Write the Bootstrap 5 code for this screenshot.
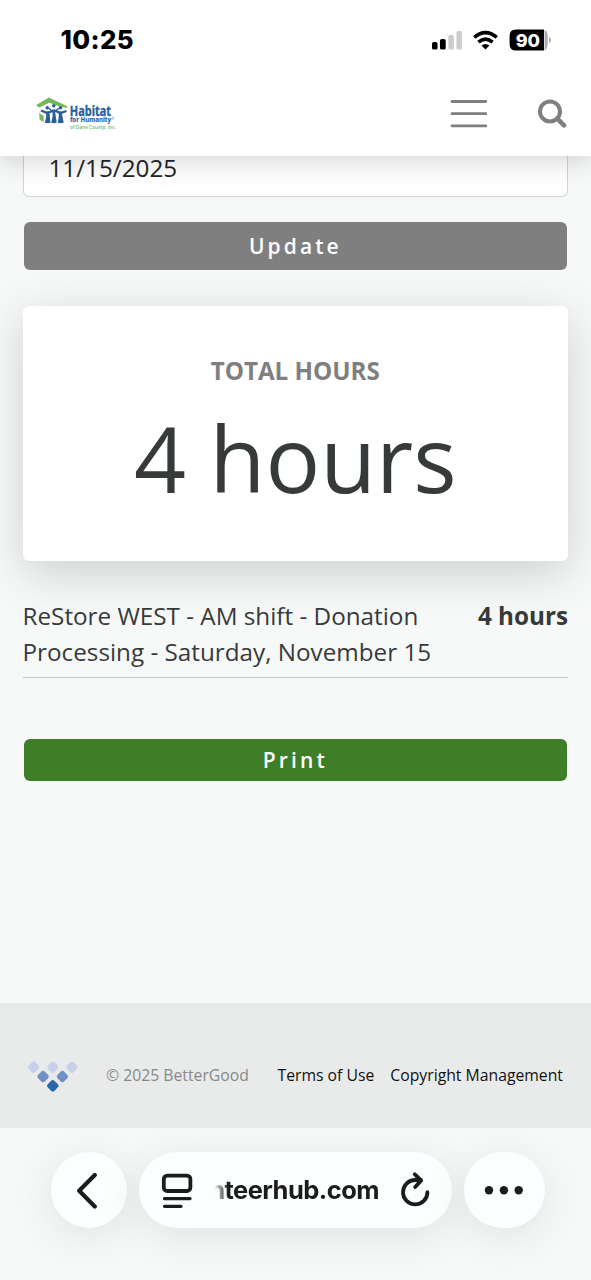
<!DOCTYPE html>
<html lang="en">
<head>
<meta charset="utf-8">
<meta name="viewport" content="width=device-width, initial-scale=1">
<title>Volunteer hours</title>
<link href="https://cdn.jsdelivr.net/npm/bootstrap@5.3.0/dist/css/bootstrap.min.css" rel="stylesheet">
<style>
body{font-family:"Open Sans","Noto Sans",sans-serif;background:#f7f9f9;color:#373a3b;height:1280px;overflow:hidden;font-size:24.25px}
svg{display:block;flex:none}
.top-area{height:156px;background:#fff;box-shadow:0 2px 28px rgba(0,0,0,.2);z-index:5}
.status-row{height:79px;padding:0 40px 0 60.5px}
.clock{font:800 25.8px/1 Inter,sans-serif;color:#000;letter-spacing:.35px;padding-top:1px}
.site-nav{height:77px;padding:0 24px 8px 35px}
.page-main{height:847px;padding:0 23px 0 22.5px}
.date-box{height:41px;border:1.5px solid #ced4da;border-top:0;border-radius:0 0 6px 6px;background:#fff;color:#212529;padding:0 25px;line-height:24px}
.wide-btn{margin:0 1.3px 0 1.5px;border:0;border-radius:6px;padding:1px 0 0;font-weight:600;font-size:21px;letter-spacing:3.1px;color:#fff}
.wide-btn.update{background:#7f7f7f;height:48.5px;margin-top:24.5px}
.wide-btn.print{background:#3d7e26;height:42.5px;margin-top:60.5px}
.wide-btn:hover{color:#fff}
.total-card{height:255px;margin-top:36px;border:0;border-radius:6px;box-shadow:0 12px 48px rgba(0,0,0,.17);color:#373a3b}
.total-label{font-size:24.2px;font-weight:700;line-height:36px;color:#7f7f7f;margin-top:47px}
.total-value{font-size:91px;line-height:110px;margin-top:14px}
.entry{margin-top:36.5px;line-height:36.3px;border-bottom:1.5px solid #c9cccc;height:80.5px}
.site-footer{height:125px;background:#e9ebeb;font-size:15.75px;padding:20px 28px 0 27px}
.site-footer a{color:#111;text-decoration:none}
.browser-bar{height:152px;padding:24px 0 0 51px;gap:12px}
.glass{height:76px;border-radius:41px;background:#fdfefe;box-shadow:0 8px 44px rgba(0,0,0,.095)}
.address{font:700 25.5px/34px Inter,sans-serif;letter-spacing:-.55px;color:#1b1c1c;width:165px;height:34px;overflow:hidden;direction:rtl;white-space:nowrap;-webkit-mask-image:linear-gradient(90deg,transparent,#000 14px)}
</style>
</head>
<body class="d-flex flex-column">
<header class="top-area position-relative flex-shrink-0">
  <div class="status-row d-flex align-items-center justify-content-between">
    <span class="clock">10:25</span>
    <svg width="120" height="24" viewBox="431 27 120 24">
      <rect x="432" y="41" width="5.5" height="7.6" rx="1.7"/><rect x="440" y="38" width="5.7" height="10.6" rx="1.7"/>
      <rect x="448.4" y="34" width="5.5" height="14.6" rx="1.7" fill="#ccc"/><rect x="456.4" y="30" width="5.5" height="18.6" rx="1.7" fill="#ccc"/>
      <g fill="none" stroke="#000" stroke-width="3.6"><path d="M474.2 36.4Q485.5 26.9 496.8 36.4"/><path d="M478.4 41.2Q485.5 35.1 492.6 41.2"/></g>
      <path d="M481.6 44.5Q485.5 41.4 489.4 44.5L485.5 48.6Z"/>
      <path d="M516 28.6H544V49.6H516Q509.6 49.6 509.6 43V35Q509.6 28.6 516 28.6Z"/>
      <path d="M544.6 28.8Q547.6 30.2 547.6 35V43Q547.6 48 544.6 49.4Z" fill="#aaa"/><path d="M549 36.2Q551 37 551 39.1T549 42Z" fill="#aaa"/>
      <text x="527.9" y="45.5" text-anchor="middle" font-family="Inter,sans-serif" font-weight="800" font-size="18" fill="#fff">90</text>
    </svg>
  </div>
  <nav class="site-nav d-flex align-items-center">
    <svg width="84" height="36" viewBox="35 96 84 36" class="me-auto" role="img" aria-label="Habitat for Humanity of Dane County">
      <path d="M36 105.3L48.8 97.6L67.2 106.2V107.8L61.8 107.2L49.2 102.8L39.3 107.4Z" fill="#72b95b"/>
      <path d="M39.2 113L43.7 116V122.3L39.6 119.8Z" fill="#72b95b"/>
      <g fill="#285f9b"><circle cx="47.3" cy="107.8" r="1.7"/><circle cx="53.8" cy="105.8" r="1.8"/><circle cx="60.5" cy="107.8" r="1.7"/></g>
      <g fill="none" stroke="#285f9b"><path d="M41 110.6L46 112.6H49L53 110.6H55L59 112.6H62L66.5 111" stroke-width="2.2"/><path d="M48.6 108.2L52.2 111H55.4L59 108.2" stroke-width="1.4"/>
      <path d="M47.6 111.5V117L46.2 123M48.3 114L49 123M53.9 110.5V117L52.5 123M54 114L55.3 123M60.2 111.5V117L59.2 123M60.6 114L62.3 123" stroke-width="2.8"/></g>
      <g font-family="'Open Sans',sans-serif"><text x="69.8" y="115.9" font-size="14.2" font-weight="700" fill="#285f9b" stroke="#285f9b" stroke-width=".35" textLength="41.3" lengthAdjust="spacingAndGlyphs">Habitat</text>
      <text x="70" y="122.3" font-size="7.4" font-weight="700" fill="#285f9b" stroke="#285f9b" stroke-width=".15" textLength="41" lengthAdjust="spacingAndGlyphs">for Humanity</text>
      <text x="111.3" y="120.4" font-size="3.5" fill="#285f9b">®</text>
      <text x="70" y="129.1" font-size="6" font-weight="600" fill="#72b95b" textLength="46" lengthAdjust="spacingAndGlyphs">of Dane County, Inc.</text></g>
    </svg>
    <svg width="38" height="30" viewBox="450 99 38 30" style="margin-right:50px" stroke="#7f7f7f" stroke-width="2.8" stroke-linecap="round"><path d="M452 101.5H485.8M452 113.7H485.8M452 125.9H485.8"/></svg>
    <svg width="29" height="30" viewBox="538 98.6 29 30" fill="none" stroke="#7f7f7f"><circle cx="550" cy="111" r="10" stroke-width="4"/><path d="M557.5 118.4L564 125" stroke-width="4.6" stroke-linecap="round"/></svg>
  </nav>
</header>
<main class="page-main d-flex flex-column flex-shrink-0">
  <div class="date-box">11/15/2025</div>
  <button class="btn wide-btn update">Update</button>
  <section class="card total-card text-center">
    <div class="total-label">TOTAL HOURS</div>
    <div class="total-value">4 hours</div>
  </section>
  <div class="entry d-flex justify-content-between position-relative">
    <div>ReStore WEST - AM shift - Donation<br>Processing - Saturday, November 15</div>
    <strong class="text-nowrap">4 hours</strong>
  </div>
  <button class="btn wide-btn print">Print</button>
</main>
<footer class="site-footer d-flex align-items-center flex-shrink-0">
  <svg width="52" height="32" viewBox="27 1060 52 32">
    <defs><rect id="gem" x="-4.7" y="-4.7" width="9.4" height="9.4" rx="2.5" transform="rotate(45)"/></defs>
    <g fill="#c8d0e9"><use href="#gem" x="33.6" y="1067.2"/><use href="#gem" x="52.8" y="1067.2"/><use href="#gem" x="72" y="1067.2"/></g>
    <g fill="#718fc7"><use href="#gem" x="43.1" y="1076.6"/><use href="#gem" x="62.4" y="1076.6"/></g>
    <use href="#gem" x="52.8" y="1085.8" fill="#2866ad"/>
  </svg>
  <span style="margin-left:27px;color:#878989">© 2025 BetterGood</span>
  <a href="#" class="ms-auto">Terms of Use</a><a href="#" class="ms-3">Copyright Management</a>
</footer>
<div class="browser-bar d-flex flex-shrink-0">
  <div class="glass d-flex align-items-center justify-content-center" style="width:76px">
    <svg width="24" height="38" viewBox="76.5 1171 24 38" fill="none" stroke="#1b1c1c" stroke-width="4.2" stroke-linecap="round" stroke-linejoin="round"><path d="M94.3 1174.9L78.7 1190.7L94.3 1206.5"/></svg>
  </div>
  <div class="glass d-flex align-items-center" style="width:312.5px;padding-left:22px">
    <svg width="32" height="38" viewBox="161 1171 32 38" fill="none" stroke="#1b1c1c" stroke-width="3.8" stroke-linecap="round"><rect x="163.8" y="1175.6" width="26.6" height="15.4" rx="3.5"/><path d="M164.5 1198.6H190M164.5 1206.3H181" stroke-width="3.3"/></svg>
    <div class="address" style="margin-left:21px">volunteerhub.com</div>
    <svg width="32" height="38" viewBox="399 1170 32 38" style="margin-left:20px" fill="none" stroke="#1b1c1c" stroke-width="3.8" stroke-linecap="round" stroke-linejoin="round"><path d="M427.4 1191.2A12.2 12.2 0 1 1 415.2 1179H421M414.8 1173.3L421.2 1179.4L415.2 1186"/></svg>
  </div>
  <div class="glass d-flex align-items-center justify-content-center" style="width:81.5px">
    <svg width="40" height="10" viewBox="484 1184.7 40 10" fill="#1b1c1c"><circle cx="489" cy="1190" r="4.2"/><circle cx="503.9" cy="1190" r="4.2"/><circle cx="518.7" cy="1190" r="4.2"/></svg>
  </div>
</div>
<script src="https://cdn.jsdelivr.net/npm/bootstrap@5.3.0/dist/js/bootstrap.bundle.min.js"></script>
</body>
</html>
